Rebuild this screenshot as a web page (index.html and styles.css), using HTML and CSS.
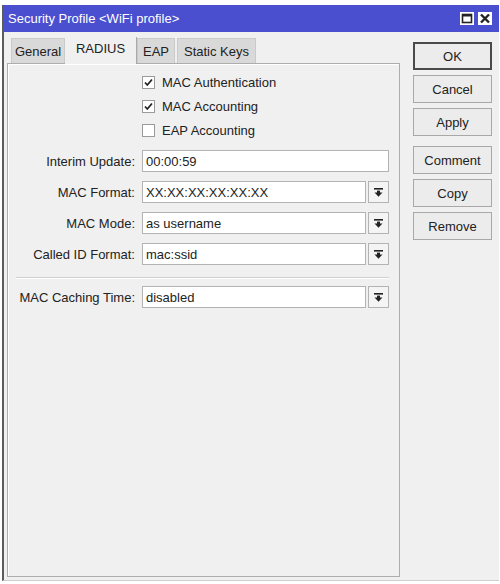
FILE: index.html
```html
<!DOCTYPE html>
<html lang="en">
<head>
    <meta charset="UTF-8">
    <meta name="viewport" content="width=device-width, initial-scale=1.0">
    <title>Security Profile</title>
    <link rel="stylesheet" href="styles.css">
</head>
<body>

    <div class="window">
        <div class="titlebar">
            <span class="title">Security Profile &lt;WiFi profile&gt;</span>
            <div class="title-buttons">
                <span class="tbtn">
                    <svg width="14" height="13" viewBox="0 0 14 13"><rect x="2.5" y="2.5" width="9" height="8" fill="none" stroke="#222" stroke-width="1.6"/><rect x="2.5" y="2.5" width="9" height="2" fill="#222"/></svg>
                </span>
                <span class="tbtn">
                    <svg width="14" height="13" viewBox="0 0 14 13"><path d="M3 2.5 L11 10.5 M11 2.5 L3 10.5" stroke="#222" stroke-width="2.4"/></svg>
                </span>
            </div>
        </div>

        <div class="content">
            <div class="main">
                <div class="tabs">
                    <span class="tab tab-general">General</span>
                    <span class="tab tab-radius active">RADIUS</span>
                    <span class="tab tab-eap">EAP</span>
                    <span class="tab tab-keys">Static Keys</span>
                </div>

                <div class="panel">
                    <div class="checks">
                        <label class="check-row"><span class="box checked"></span>MAC Authentication</label>
                        <label class="check-row"><span class="box checked"></span>MAC Accounting</label>
                        <label class="check-row"><span class="box"></span>EAP Accounting</label>
                    </div>

                    <div class="fields">
                        <div class="row">
                            <span class="label">Interim Update:</span>
                            <span class="input">00:00:59</span>
                        </div>
                        <div class="row">
                            <span class="label">MAC Format:</span>
                            <div class="select">
                                <span class="input">XX:XX:XX:XX:XX:XX</span>
                                <span class="drop"></span>
                            </div>
                        </div>
                        <div class="row">
                            <span class="label">MAC Mode:</span>
                            <div class="select">
                                <span class="input">as username</span>
                                <span class="drop"></span>
                            </div>
                        </div>
                        <div class="row">
                            <span class="label">Called ID Format:</span>
                            <div class="select">
                                <span class="input">mac:ssid</span>
                                <span class="drop"></span>
                            </div>
                        </div>
                    </div>

                    <div class="separator"></div>

                    <div class="row">
                        <span class="label">MAC Caching Time:</span>
                        <div class="select">
                            <span class="input">disabled</span>
                            <span class="drop"></span>
                        </div>
                    </div>
                </div>
            </div>

            <div class="buttons">
                <button class="btn default">OK</button>
                <button class="btn">Cancel</button>
                <button class="btn">Apply</button>
                <button class="btn spaced">Comment</button>
                <button class="btn">Copy</button>
                <button class="btn">Remove</button>
            </div>
        </div>
    </div>

</body>
</html>
```

FILE: styles.css
```css
/* General styling */
body {
    margin: 0;
    background: #fff;
    font-family: 'Liberation Sans', Arial, sans-serif;
    font-size: 13px;
    color: #222;
}

.window {
    margin: 5px 1px 0 2px;
    height: 575px;
    border-left: 2px solid #5c5c5c;
    border-bottom: 1px solid #cfcfcf;
    background-color: #f0f0f0;
    display: flex;
    flex-direction: column;
}

/* Title bar */
.titlebar {
    height: 27px;
    background-color: #4a4fcf;
    display: flex;
    align-items: center;
    justify-content: space-between;
    padding: 0 7px 0 4px;
}

.title {
    color: #fff;
    font-size: 13px;
}

.title-buttons {
    display: flex;
    gap: 4px;
}

.tbtn {
    width: 14px;
    height: 13px;
    background-color: #fff;
    display: flex;
}

/* Main area */
.content {
    flex: 1;
    display: flex;
    padding: 5px 7px 3px 3px;
    min-height: 0;
}

.main {
    width: 393px;
    display: flex;
    flex-direction: column;
}

.tabs {
    display: flex;
    height: 26px;
    padding-left: 4px;
    position: relative;
    z-index: 1;
}

.tab {
    display: flex;
    align-items: center;
    justify-content: center;
    box-sizing: border-box;
    height: 25px;
    margin-top: 1px;
    background-color: #d9d9d9;
    border: 1px solid #cacaca;
    border-bottom: none;
    padding-top: 1px;
}

.tab-general { width: 54px; }
.tab-radius { width: 72px; }
.tab-eap { width: 38px; margin-right: 2px; }
.tab-keys { width: 79px; }

.tab.active {
    height: 27px;
    margin-top: 0;
    padding-top: 0;
    padding-bottom: 5px;
    background-color: #f0f0f0;
    border: none;
    border-right: 1px solid #a9a9a9;
}

.panel {
    flex: 1;
    border: 1px solid #adadad;
    box-shadow: inset 1px 1px #fff;
    padding: 6px 10px 0 0;
}

/* Checkboxes */
.checks {
    display: flex;
    flex-direction: column;
    padding-left: 134px;
    margin-bottom: 8px;
}

.check-row {
    height: 24px;
    display: flex;
    align-items: center;
    gap: 7px;
}

.box {
    width: 13px;
    height: 13px;
    box-sizing: border-box;
    background-color: #fff;
    border: 1px solid #9a9a9a;
}

.box.checked {
    background-image: url("data:image/svg+xml,%3Csvg xmlns='http://www.w3.org/2000/svg' width='11' height='11' viewBox='0 0 11 11'%3E%3Cpath d='M2 5.5 L4.3 8 L9 2.5' fill='none' stroke='%23222' stroke-width='1.8'/%3E%3C/svg%3E");
    background-repeat: no-repeat;
}

/* Form rows */
.fields {
    display: flex;
    flex-direction: column;
    gap: 9px;
}

.row {
    display: grid;
    grid-template-columns: 127px 247px;
    column-gap: 7px;
    align-items: center;
    height: 22px;
}

.label {
    text-align: right;
    white-space: nowrap;
}

.input {
    display: flex;
    align-items: center;
    height: 22px;
    box-sizing: border-box;
    padding-left: 3px;
    background-color: #fff;
    border: 1px solid #b3b3b3;
    white-space: nowrap;
}

.select {
    display: grid;
    grid-template-columns: 224px 21px;
    column-gap: 2px;
}

.drop {
    height: 22px;
    box-sizing: border-box;
    border: 1px solid #b3b3b3;
    background-color: #f4f4f4;
    background-image: url("data:image/svg+xml,%3Csvg xmlns='http://www.w3.org/2000/svg' width='9' height='9' viewBox='0 0 9 9'%3E%3Crect x='0' y='0' width='9' height='1.6' fill='%23222'/%3E%3Crect x='3' y='2.6' width='3' height='2.4' fill='%23222'/%3E%3Cpath d='M0.5 4.6 L8.5 4.6 L4.5 8.8 Z' fill='%23222'/%3E%3C/svg%3E");
    background-repeat: no-repeat;
    background-position: center;
}

.separator {
    margin: 12px 0 7px 8px;
    border-top: 1px solid #cfcfcf;
    border-bottom: 1px solid #fff;
    width: 373px;
}

/* Right buttons */
.buttons {
    display: flex;
    flex-direction: column;
    gap: 5px;
    margin-left: 13px;
    padding-top: 5px;
}

.btn {
    width: 79px;
    height: 28px;
    font-family: inherit;
    font-size: 13px;
    color: #222;
    background-color: #ececec;
    border: 1px solid #a8a8a8;
    padding: 0;
}

.btn.default {
    border: 2px solid #4a4a4a;
}

.btn.spaced {
    margin-top: 5px;
}
```
